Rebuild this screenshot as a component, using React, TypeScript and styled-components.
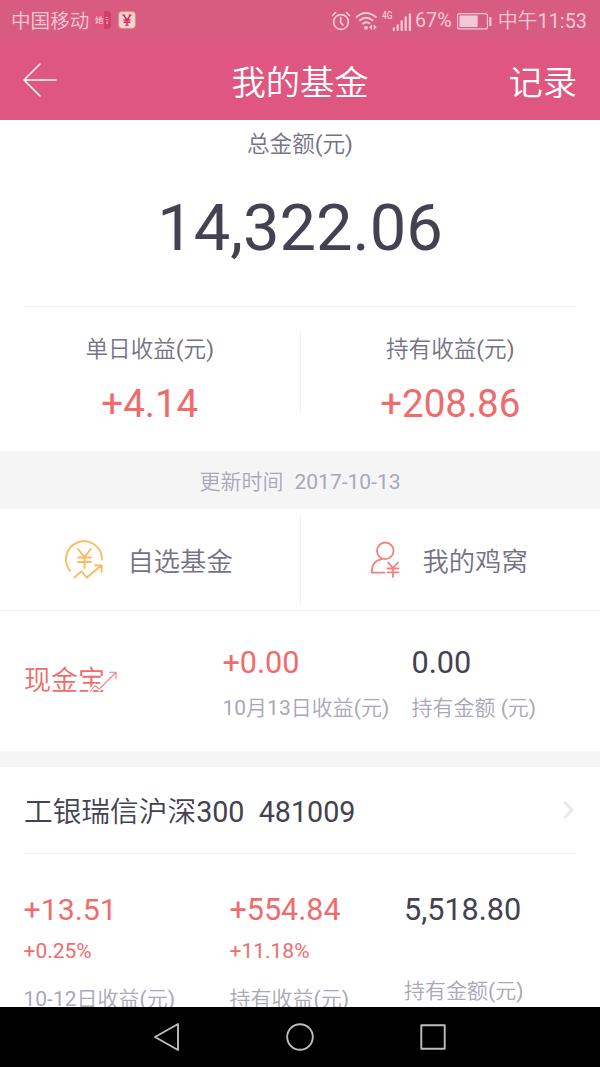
import React from "react";
import styled, { createGlobalStyle } from "styled-components";

const GlobalStyle = createGlobalStyle`
  * { box-sizing: border-box; }
  body {
    margin: 0;
    background: #fff;
    font-family: Roboto, "Noto Sans CJK SC", sans-serif;
    overflow: hidden;
  }
  svg { display: block; flex: none; }
`;

const color = {
  ink: "#434152",
  label: "#747285",
  muted: "#a9a7b8",
  coral: "#f06c6c",
  line: "#f1f1f1",
  band: "#f5f5f5",
};

const Screen = styled.div`
  width: 600px;
  height: 1067px;
  display: flex;
  flex-direction: column;
  overflow: hidden;
`;

const Text = styled.div<{ $size: number; $line: number; $color?: string; $light?: boolean }>`
  font-size: ${(p) => p.$size}px;
  line-height: ${(p) => p.$line}px;
  color: ${(p) => p.$color ?? color.ink};
  font-weight: ${(p) => (p.$light ? 350 : 380)};
  white-space: pre;
`;

const Digits = styled.span`
  font-weight: 380;
`;

const StatusBar = styled.div`
  flex: none;
  height: 40px;
  display: flex;
  align-items: center;
  padding: 2px 13px 0 11px;
  background: #d85c80;
`;

const StatusIcons = styled.div`
  display: flex;
  align-items: center;
  margin-left: auto;
`;

const StatusGap = styled.div<{ $width: number }>`
  width: ${(p) => p.$width}px;
`;

const Clock = styled.div`
  padding-top: 2px;
`;

const AppIcons = styled.div`
  display: flex;
  gap: 7px;
  margin: -2px 0 0 4px;
`;

const Header = styled.header`
  flex: none;
  height: 80px;
  display: grid;
  grid-template-columns: 1fr auto 1fr;
  align-items: center;
  padding: 0 23px;
  background: #df5780;
`;

const HeaderText = styled.div`
  padding-top: 5px;
`;

const HeaderAction = styled(HeaderText)`
  justify-self: end;
`;

const Total = styled.section`
  flex: none;
  height: 187px;
  margin: 0 24px;
  padding-top: 10px;
  display: flex;
  flex-direction: column;
  align-items: center;
  gap: 28px;
  border-bottom: 1px solid ${color.line};
`;

const Halves = styled.section<{ $height: number; $border?: boolean }>`
  flex: none;
  height: ${(p) => p.$height}px;
  display: grid;
  grid-template-columns: 1fr 1px 1fr;
  border-bottom: ${(p) => (p.$border ? `1px solid ${color.line}` : "none")};
`;

const VLine = styled.div<{ $top: number; $height: number }>`
  margin-top: ${(p) => p.$top}px;
  height: ${(p) => p.$height}px;
  background: ${color.line};
`;

const Earning = styled.div`
  display: flex;
  flex-direction: column;
  align-items: center;
  padding-top: 28px;
  gap: 14px;
`;

const UpdateBand = styled.div`
  flex: none;
  height: 58px;
  display: flex;
  justify-content: center;
  gap: 11px;
  padding-top: 16px;
  background: ${color.band};
`;

const Shortcut = styled.div<{ $left: number; $gap: number }>`
  display: flex;
  align-items: center;
  gap: ${(p) => p.$gap}px;
  padding-left: ${(p) => p.$left}px;
`;

const ShortcutLabel = styled.div`
  padding-top: 5px;
`;

const CashRow = styled.section`
  flex: none;
  height: 140px;
  display: grid;
  grid-template-columns: 198.5px 189px 1fr;
  padding: 32px 0 0 24px;
`;

const Brand = styled.div`
  position: relative;
  align-self: start;
  padding-top: 18px;
`;

const BrandArrow = styled.svg`
  position: absolute;
  left: 64px;
  top: 24px;
`;

const Stack = styled.div<{ $gap: number }>`
  display: flex;
  flex-direction: column;
  gap: ${(p) => p.$gap}px;
`;

const Spacer = styled.div`
  flex: none;
  height: 16px;
  background: ${color.band};
`;

const FundTitle = styled.div`
  flex: none;
  height: 87px;
  margin: 0 24px;
  display: flex;
  align-items: center;
  justify-content: space-between;
  border-bottom: 1px solid ${color.line};
`;

const FundName = styled.div`
  padding-top: 3px;
`;

const FundFigures = styled.div`
  flex: none;
  height: 153px;
  overflow: hidden;
  display: grid;
  grid-template-columns: 206px 174.5px 1fr;
  padding: 36px 0 0 23.5px;
`;

const Percent = styled.div`
  padding: 6px 0 18px;
`;

const LatePadding = styled.div`
  padding-top: 46px;
`;

const NavBar = styled.nav`
  flex: none;
  height: 60px;
  display: flex;
  justify-content: center;
  align-items: center;
  gap: 105px;
  background: #000;
`;

const pale = "#f4c9d6";

const BeautyAppIcon = () => (
  <svg width="18" height="18" viewBox="0 0 18 18">
    <rect width="18" height="18" rx="4" fill="#e2557c" />
    <path d="M11 0h3a4 4 0 0 1 4 4v10a4 4 0 0 1-4 4h-3z" fill="#d33d69" />
    <text x="2" y="12" fontSize="8.500" fontWeight="500" fill="#f4c2d0" fontFamily="Noto Sans CJK SC">她</text>
    <path d="M12.500 6.500h2.500M12.500 8.500h3M13 11h2.500M13 12.500h2" stroke="#f0a5bb" strokeWidth="0.900" />
  </svg>
);

const YuanAppIcon = () => (
  <svg width="18" height="18" viewBox="0 0 18 18">
    <rect x="0.600" y="0.600" width="16.800" height="16.800" rx="3.300" fill="#f5d3dc" stroke="#dd9366" strokeWidth="1" />
    <path d="M5.500 4l3.500 5M12.500 4L9 9v5.500M5.500 9h7M5.500 11.300h7" stroke="#d5294f" strokeWidth="1.400" fill="none" />
    <path d="M4 4h3.500M10.500 4h3.500M7 14.300h4" stroke="#d5294f" strokeWidth="0.900" />
  </svg>
);

const AlarmIcon = () => (
  <svg width="20" height="20" viewBox="0 0 20 20" fill="none" stroke={pale} strokeWidth="1.700" strokeLinecap="round">
    <circle cx="10" cy="11" r="7.400" />
    <path d="M9.700 6.500v5l2.300 2.500M1.500 4.500l3-2.800M18.500 4.500l-3-2.800" />
  </svg>
);

const WifiIcon = () => (
  <svg width="23" height="20" viewBox="0 0 23 20" fill="none" stroke={pale} strokeWidth="1.900">
    <path d="M1 6.500Q11 -2.500 21.500 6.500" />
    <path d="M4.300 9.800Q11 3.500 18.200 9.800" />
    <path d="M7.400 13.200Q11 9.500 15 12.800" />
    <circle cx="11" cy="16.800" r="1.900" fill={pale} stroke="none" />
    <path d="M17 13.500v5.500l-3-2.700zM18.700 13.500v5.500l3-2.700z" fill={pale} stroke="none" />
  </svg>
);

const SignalIcon = () => (
  <svg width="33" height="22" viewBox="0 0 33 22">
    <text x="0" y="9" fontSize="11" fontWeight="500" fill={pale} textLength="10.500" lengthAdjust="spacingAndGlyphs" fontFamily="Roboto">4G</text>
    <path d="M11.800 20v-1.500M15.700 20v-4.500M19.700 20v-8.500M23.700 20v-12.500M27.900 20v-15.500" stroke={pale} strokeWidth="2.300" strokeLinecap="round" />
  </svg>
);

const BatteryIcon = () => (
  <svg width="35" height="17" viewBox="0 0 35 17">
    <rect x="0.600" y="0.600" width="29.800" height="15.300" rx="2" fill="none" stroke={pale} strokeWidth="1.100" />
    <rect x="2.500" y="2.500" width="18.200" height="11.500" fill={pale} />
    <path d="M33.300 4v9" stroke={pale} strokeWidth="2.200" />
  </svg>
);

const BackArrow = () => (
  <svg width="34" height="34" viewBox="0 0 34 34" fill="none" stroke="#fff" strokeWidth="1.500" strokeLinecap="round" strokeLinejoin="round">
    <path d="M33 17H1M17 1L1 17l16 16" />
  </svg>
);

const GrowthIcon = () => (
  <svg width="39" height="40" viewBox="0 0 39 40" fill="none" stroke="#fbb95a" strokeWidth="1.800" strokeLinecap="round" strokeLinejoin="round">
    <path d="M5.300 31A18 18 0 1 1 37 19.500" />
    <path d="M13 9l6.500 8L26 9M19.500 17v11M13 17.500h13M13 22h13" />
    <path d="M9.300 37.500l7-6.200 5.500 6.200 14.500-12M30 25.300h6.700v6.400" />
  </svg>
);

const MemberIcon = () => (
  <svg width="30" height="37" viewBox="0 0 30 37" fill="none" stroke="#f2807f" strokeWidth="1.800" strokeLinecap="round" strokeLinejoin="round">
    <circle cx="15.300" cy="9.800" r="8.300" />
    <path d="M14.500 31.700H1.800C1.800 24 5.500 19 12 18.200" />
    <path d="M18 21.500l5 5.500 5-5.500M23 27v9M17.500 27.500h11M17.500 31.300h11" />
  </svg>
);

const Chevron = () => (
  <svg width="14" height="20" viewBox="0 0 14 20" fill="none" stroke="#e9e9e9" strokeWidth="3">
    <path d="M2.300 1.800l7.700 8.200-7.700 8.200" />
  </svg>
);

const Unit = () => <Digits>(</Digits>;

const Yuan = () => (
  <>
    <Unit />元<Digits>)</Digits>
  </>
);

const Gain = ({ label, value }: { label: string; value: string }) => (
  <Earning>
    <Text $size={22.600} $line={30} $color={color.label} $light>{label}<Yuan /></Text>
    <Text $size={38.500} $line={50} $color={color.coral}>{value}</Text>
  </Earning>
);

export default function App() {
  return (
    <Screen>
      <GlobalStyle />
      <StatusBar>
        <Clock><Text $size={19.600} $line={24} $color={pale} $light>中国移动</Text></Clock>
        <AppIcons>
          <BeautyAppIcon />
          <YuanAppIcon />
        </AppIcons>
        <StatusIcons>
          <AlarmIcon />
          <StatusGap $width={4} />
          <WifiIcon />
          <StatusGap $width={4} />
          <SignalIcon />
          <Text $size={19.800} $line={24} $color={pale}>67%</Text>
          <StatusGap $width={5} />
          <BatteryIcon />
          <StatusGap $width={6} />
          <Clock><Text $size={19.900} $line={24} $color={pale} $light>中午<Digits>11:53</Digits></Text></Clock>
        </StatusIcons>
      </StatusBar>
      <Header>
        <BackArrow />
        <HeaderText>
          <Text $size={34.300} $line={44} $color="#fff" $light>我的基金</Text>
        </HeaderText>
        <HeaderAction>
          <Text $size={34.200} $line={44} $color="#fff" $light>记录</Text>
        </HeaderAction>
      </Header>

      <Total>
        <Text $size={22.600} $line={30} $color={color.label} $light>总金额<Yuan /></Text>
        <Text $size={65} $line={80}>14,322.06</Text>
      </Total>
      <Halves $height={144}>
        <Gain label="单日收益" value="+4.14" />
        <VLine $top={25} $height={80} />
        <Gain label="持有收益" value="+208.86" />
      </Halves>

      <UpdateBand>
        <Text $size={21} $line={30} $color={color.muted} $light>更新时间</Text>
        <Text $size={21} $line={30} $color={color.muted}>2017-10-13</Text>
      </UpdateBand>

      <Halves $height={102} $border>
        <Shortcut $left={65} $gap={23.500}>
          <GrowthIcon />
          <ShortcutLabel>
            <Text $size={26.300} $line={36} $color={color.label} $light>自选基金</Text>
          </ShortcutLabel>
        </Shortcut>
        <VLine $top={7} $height={88} />
        <Shortcut $left={69} $gap={23}>
          <MemberIcon />
          <ShortcutLabel>
            <Text $size={26.300} $line={36} $color={color.label} $light>我的鸡窝</Text>
          </ShortcutLabel>
        </Shortcut>
      </Halves>

      <CashRow>
        <Brand>
          <Text $size={27} $line={40} $color={color.coral} $light>现金宝</Text>
          <BrandArrow width="32" height="28" viewBox="0 0 32 28" fill="none">
            <path d="M1 25.500l6-6.800 4.300 3.300L24 9.300" stroke="#fff" strokeWidth="4" />
            <path d="M2 24.500l5-5.800 4.300 3.300L28 5.300M21 5.300h7v7" stroke="#f0807f" strokeWidth="1.100" />
          </BrandArrow>
        </Brand>
        <Stack $gap={10}>
          <Text $size={30.600} $line={40} $color={color.coral}>+0.00</Text>
          <Text $size={21} $line={30} $color={color.muted} $light><Digits>10</Digits>月<Digits>13</Digits>日收益<Yuan /></Text>
        </Stack>
        <Stack $gap={10}>
          <Text $size={30.600} $line={40}>0.00</Text>
          <Text $size={21} $line={30} $color={color.muted} $light>持有金额 <Yuan /></Text>
        </Stack>
      </CashRow>
      <Spacer />

      <FundTitle>
        <FundName>
          <Text $size={28.700} $line={40} $light>工银瑞信沪深<Digits>300  481009</Digits></Text>
        </FundName>
        <Chevron />
      </FundTitle>
      <FundFigures>
        <div>
          <Text $size={30.300} $line={40} $color={color.coral}>+13.51</Text>
          <Percent><Text $size={21} $line={30} $color={color.coral}>+0.25%</Text></Percent>
          <Text $size={21} $line={30} $color={color.muted} $light><Digits>10-12</Digits>日收益<Yuan /></Text>
        </div>
        <div>
          <Text $size={30.500} $line={40} $color={color.coral}>+554.84</Text>
          <Percent><Text $size={21} $line={30} $color={color.coral}>+11.18%</Text></Percent>
          <Text $size={21} $line={30} $color={color.muted} $light>持有收益<Yuan /></Text>
        </div>
        <div>
          <Text $size={30.600} $line={40}>5,518.80</Text>
          <LatePadding>
            <Text $size={21} $line={30} $color={color.muted} $light>持有金额<Yuan /></Text>
          </LatePadding>
        </div>
      </FundFigures>

      <NavBar>
        <svg width="28" height="30" viewBox="0 0 28 30" fill="none" stroke="#bdbdbd" strokeWidth="1.900" strokeLinejoin="round">
          <path d="M25 2v26L2 15z" />
        </svg>
        <svg width="28" height="28" viewBox="0 0 28 28" fill="none" stroke="#bdbdbd" strokeWidth="1.900">
          <circle cx="14" cy="14" r="12.800" />
        </svg>
        <svg width="28" height="28" viewBox="0 0 28 28" fill="none" stroke="#bdbdbd" strokeWidth="1.900" strokeLinejoin="round">
          <rect x="2.300" y="2.300" width="23.400" height="23.400" />
        </svg>
      </NavBar>
    </Screen>
  );
}
